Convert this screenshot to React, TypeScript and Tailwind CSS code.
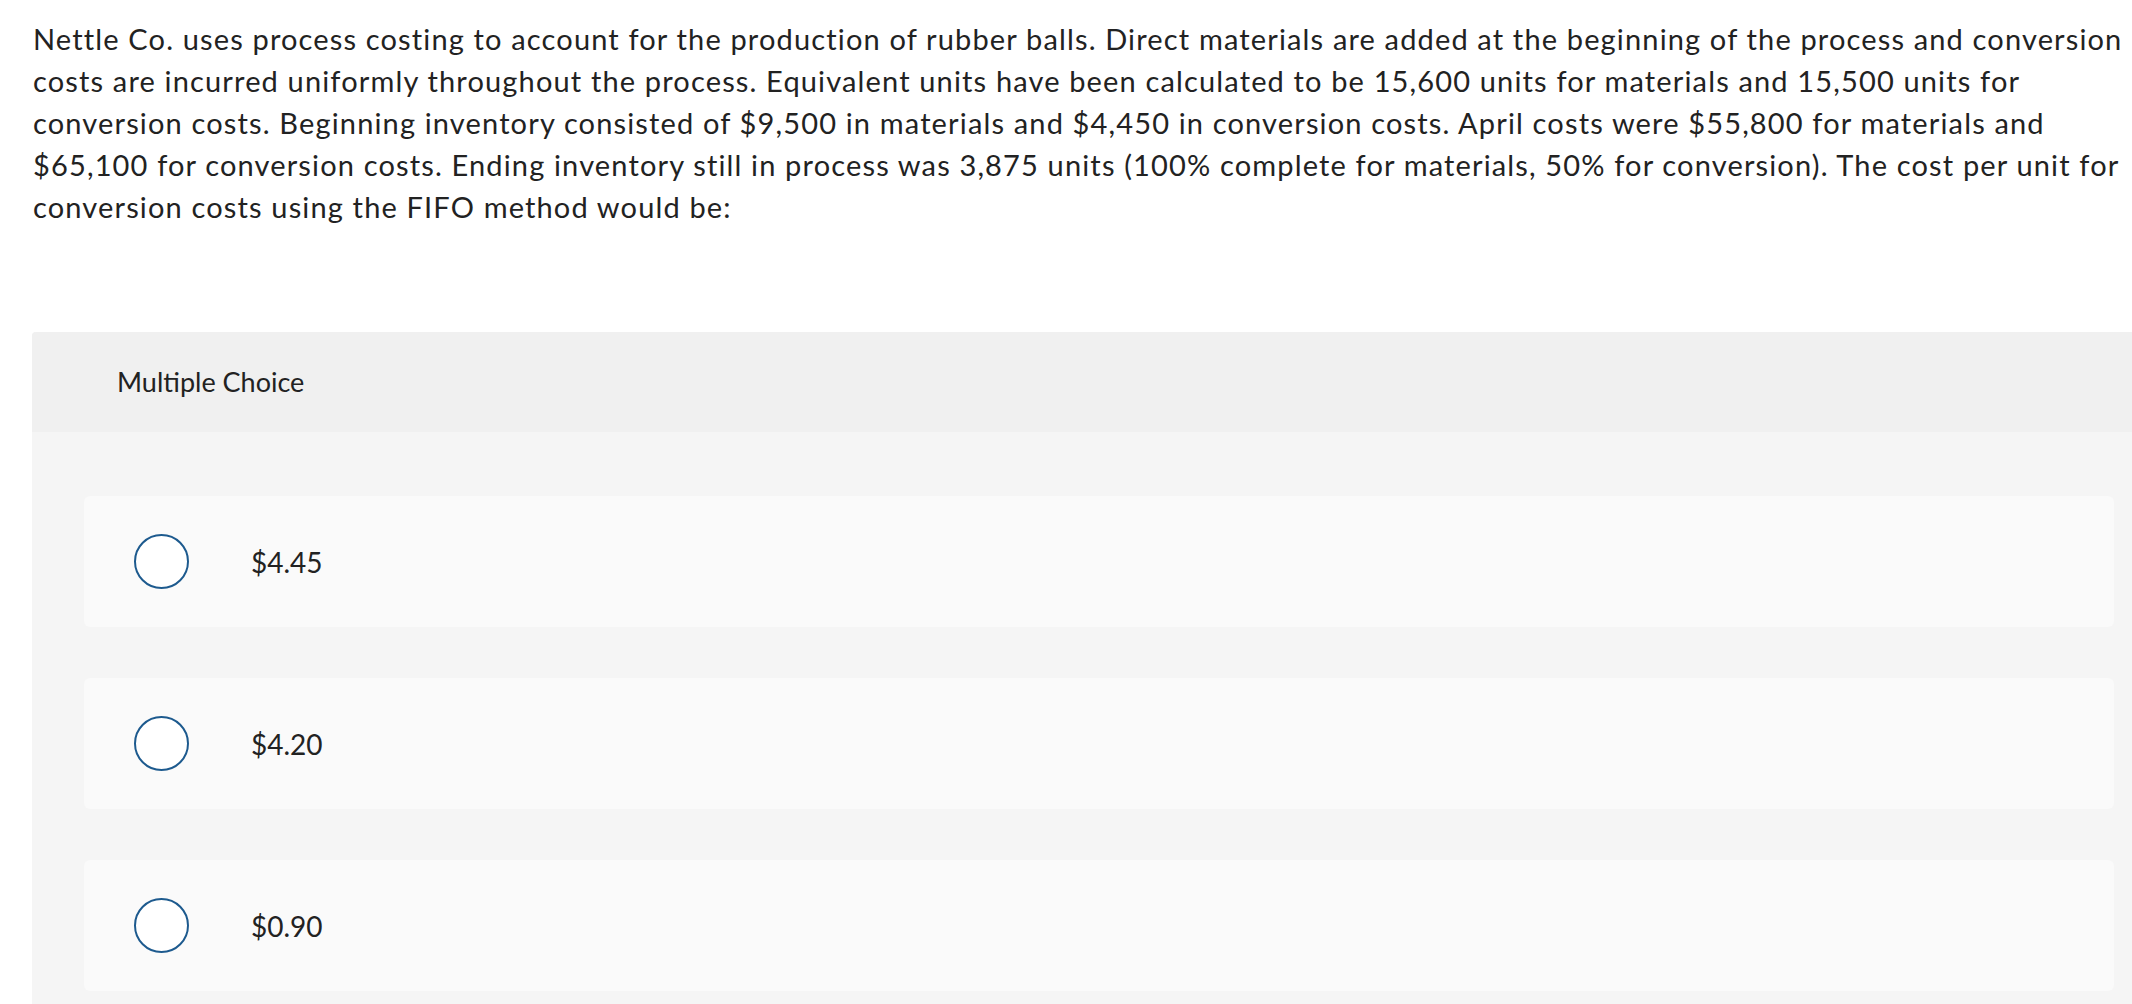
import React from 'react';

const questionLines = [
  'Nettle Co. uses process costing to account for the production of rubber balls. Direct materials are added at the beginning of the process and conversion',
  'costs are incurred uniformly throughout the process. Equivalent units have been calculated to be 15,600 units for materials and 15,500 units for',
  'conversion costs. Beginning inventory consisted of $9,500 in materials and $4,450 in conversion costs. April costs were $55,800 for materials and',
  '$65,100 for conversion costs. Ending inventory still in process was 3,875 units (100% complete for materials, 50% for conversion). The cost per unit for',
  'conversion costs using the FIFO method would be:',
];

const choices = ['$4.45', '$4.20', '$0.90'];

function ChoiceRow({ label }: { label: string }) {
  return (
    <div className="flex h-[131px] items-center rounded-[6px] bg-[#fafafa] pl-[50px]">
      <span className="h-[55px] w-[55px] shrink-0 rounded-full border-2 border-[#1d5a8e] bg-white" />
      <span className="ml-[62px] text-[28px] text-[#222]">{label}</span>
    </div>
  );
}

export default function App() {
  return (
    <div
      className="h-[1004px] w-[2132px] overflow-hidden bg-white text-[#222]"
      style={{ fontFamily: 'Lato, "Open Sans", sans-serif' }}
    >
      {/* question stem */}
      <div className="pl-[33px] pt-[18px] text-[29px] leading-[42px] tracking-[1.15px]">
        {questionLines.map((line) => (
          <div key={line} className="whitespace-nowrap">
            {line}
          </div>
        ))}
      </div>

      {/* answer panel */}
      <div className="ml-[32px] mt-[104px] w-[2134px] rounded-t-[4px] bg-[#f5f5f5]">
        <div className="flex h-[100px] items-center rounded-t-[4px] bg-[#f0f0f0] pl-[85px] text-[27px]">
          Multiple Choice
        </div>
        <div className="flex flex-col gap-[51px] px-[52px] pb-[40px] pt-[64px]">
          {choices.map((c) => (
            <ChoiceRow key={c} label={c} />
          ))}
        </div>
      </div>
    </div>
  );
}
